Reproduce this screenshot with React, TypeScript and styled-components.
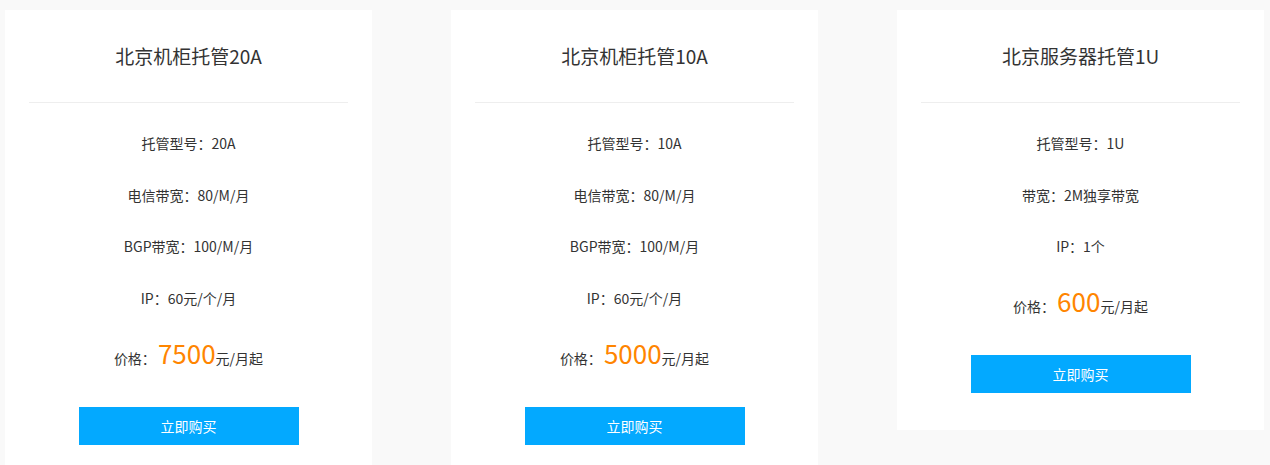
import { createGlobalStyle } from 'styled-components';
import styled from 'styled-components';

const GlobalStyle = createGlobalStyle`
  html, body {
    margin: 0;
    padding: 0;
    background: #f9f9f9;
    overflow: hidden;
  }
  body {
    font-family: "Noto Sans CJK SC", "Noto Sans", sans-serif;
    color: #333;
  }
`;

const Wrap = styled.div`
  display: flex;
  align-items: flex-start;
  gap: 79px;
  padding: 10px 0 0 5px;
`;

const Card = styled.div`
  width: 367px;
  background: #fff;
  padding-bottom: 37px;
  text-align: center;
`;

const Title = styled.h3`
  margin: 0 24px;
  height: 92px;
  line-height: 92px;
  font-size: 19px;
  font-weight: normal;
  color: #333;
  border-bottom: 1px solid #eee;
`;

const Specs = styled.ul`
  list-style: none;
  margin: 0;
  padding: 15px 0 0;
`;

const Spec = styled.li`
  height: 51.7px;
  line-height: 51.7px;
  font-size: 14px;
  color: #333;
`;

const Price = styled.div`
  margin-top: 8px;
  height: 40px;
  line-height: 40px;
  font-size: 14px;
  color: #333;
`;

const Amount = styled.span`
  font-size: 26px;
  color: #ff8500;
  margin-left: 2px;
`;

const BuyButton = styled.a`
  display: block;
  width: 220px;
  height: 38px;
  line-height: 38px;
  margin: 34px auto 0;
  background: #03a9ff;
  color: #fff;
  font-size: 14px;
  text-decoration: none;
  cursor: pointer;
`;

type Plan = {
  title: string;
  specs: string[];
  price: string;
};

const plans: Plan[] = [
  {
    title: '北京机柜托管20A',
    specs: ['托管型号：20A', '电信带宽：80/M/月', 'BGP带宽：100/M/月', 'IP：60元/个/月'],
    price: '7500',
  },
  {
    title: '北京机柜托管10A',
    specs: ['托管型号：10A', '电信带宽：80/M/月', 'BGP带宽：100/M/月', 'IP：60元/个/月'],
    price: '5000',
  },
  {
    title: '北京服务器托管1U',
    specs: ['托管型号：1U', '带宽：2M独享带宽', 'IP：1个'],
    price: '600',
  },
];

export default function App() {
  return (
    <>
      <GlobalStyle />
      <Wrap>
        {plans.map((p) => (
          <Card key={p.title}>
            <Title>{p.title}</Title>
            <Specs>
              {p.specs.map((s) => (
                <Spec key={s}>{s}</Spec>
              ))}
            </Specs>
            <Price>
              价格：<Amount>{p.price}</Amount>元/月起
            </Price>
            <BuyButton>立即购买</BuyButton>
          </Card>
        ))}
      </Wrap>
    </>
  );
}
